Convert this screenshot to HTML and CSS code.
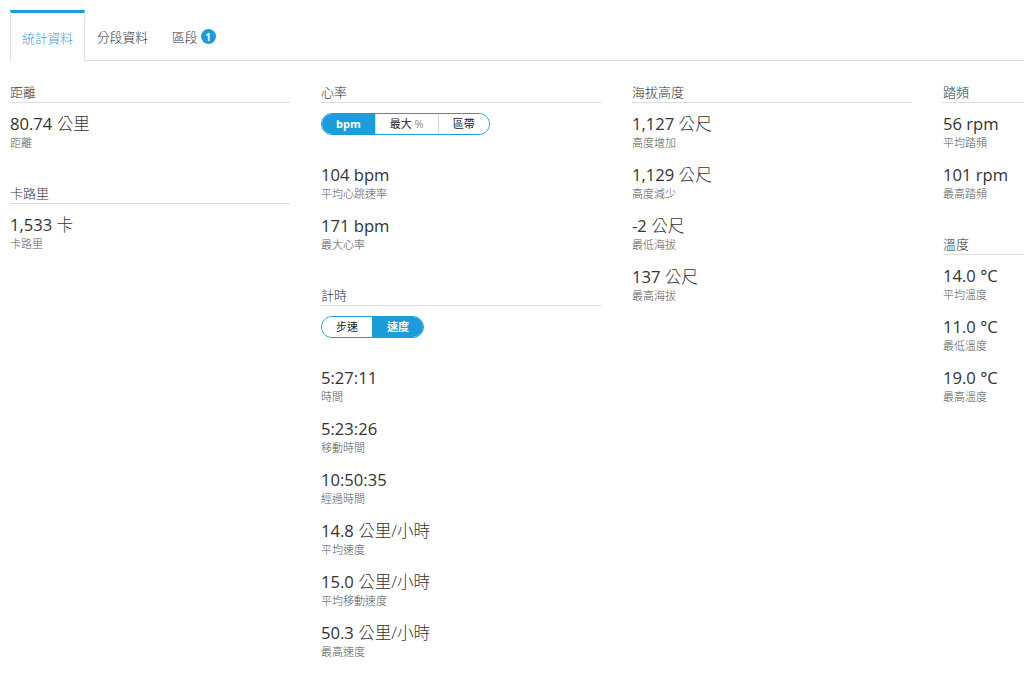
FILE: index.html
```html
<!DOCTYPE html>
<html lang="zh-Hant">
<head>
    <meta charset="UTF-8">
    <meta name="viewport" content="width=device-width, initial-scale=1.0">
    <title>統計資料</title>
    <link rel="stylesheet" href="styles.css">
</head>
<body>
    <!-- Tabs -->
    <div class="tabs">
        <div class="tab active">統計資料</div>
        <div class="tab">分段資料</div>
        <div class="tab">區段 <span class="badge">1</span></div>
    </div>

    <div class="columns">
        <!-- Column 1 -->
        <div class="column">
            <div class="section">
                <h3 class="section-title">距離</h3>
                <div class="stat">
                    <div class="value">80.74 <span class="unit">公里</span></div>
                    <div class="label">距離</div>
                </div>
            </div>
            <div class="section">
                <h3 class="section-title">卡路里</h3>
                <div class="stat">
                    <div class="value">1,533 <span class="unit">卡</span></div>
                    <div class="label">卡路里</div>
                </div>
            </div>
        </div>

        <!-- Column 2 -->
        <div class="column">
            <div class="section">
                <h3 class="section-title">心率</h3>
                <div class="toggle">
                    <span class="toggle-item selected">bpm</span>
                    <span class="toggle-item">最大 <span class="muted">%</span></span>
                    <span class="toggle-item">區帶</span>
                </div>
                <div class="stat">
                    <div class="value">104 bpm</div>
                    <div class="label">平均心跳速率</div>
                </div>
                <div class="stat">
                    <div class="value">171 bpm</div>
                    <div class="label">最大心率</div>
                </div>
            </div>
            <div class="section">
                <h3 class="section-title">計時</h3>
                <div class="toggle">
                    <span class="toggle-item">步速</span>
                    <span class="toggle-item selected">速度</span>
                </div>
                <div class="stat">
                    <div class="value">5:27:11</div>
                    <div class="label">時間</div>
                </div>
                <div class="stat">
                    <div class="value">5:23:26</div>
                    <div class="label">移動時間</div>
                </div>
                <div class="stat">
                    <div class="value">10:50:35</div>
                    <div class="label">經過時間</div>
                </div>
                <div class="stat">
                    <div class="value">14.8 <span class="unit">公里/小時</span></div>
                    <div class="label">平均速度</div>
                </div>
                <div class="stat">
                    <div class="value">15.0 <span class="unit">公里/小時</span></div>
                    <div class="label">平均移動速度</div>
                </div>
                <div class="stat">
                    <div class="value">50.3 <span class="unit">公里/小時</span></div>
                    <div class="label">最高速度</div>
                </div>
            </div>
        </div>

        <!-- Column 3 -->
        <div class="column">
            <div class="section">
                <h3 class="section-title">海拔高度</h3>
                <div class="stat">
                    <div class="value">1,127 <span class="unit">公尺</span></div>
                    <div class="label">高度增加</div>
                </div>
                <div class="stat">
                    <div class="value">1,129 <span class="unit">公尺</span></div>
                    <div class="label">高度減少</div>
                </div>
                <div class="stat">
                    <div class="value">-2 <span class="unit">公尺</span></div>
                    <div class="label">最低海拔</div>
                </div>
                <div class="stat">
                    <div class="value">137 <span class="unit">公尺</span></div>
                    <div class="label">最高海拔</div>
                </div>
            </div>
        </div>

        <!-- Column 4 -->
        <div class="column">
            <div class="section">
                <h3 class="section-title">踏頻</h3>
                <div class="stat">
                    <div class="value">56 rpm</div>
                    <div class="label">平均踏頻</div>
                </div>
                <div class="stat">
                    <div class="value">101 rpm</div>
                    <div class="label">最高踏頻</div>
                </div>
            </div>
            <div class="section">
                <h3 class="section-title">溫度</h3>
                <div class="stat">
                    <div class="value">14.0 °C</div>
                    <div class="label">平均溫度</div>
                </div>
                <div class="stat">
                    <div class="value">11.0 °C</div>
                    <div class="label">最低溫度</div>
                </div>
                <div class="stat">
                    <div class="value">19.0 °C</div>
                    <div class="label">最高溫度</div>
                </div>
            </div>
        </div>
    </div>
</body>
</html>
```

FILE: styles.css
```css
body {
    margin: 0;
    font-family: "Open Sans", "Noto Sans CJK TC", sans-serif;
    color: #333;
    background: #fff;
}

/* Tabs */
.tabs {
    display: flex;
    margin: 10px 0 0 10px;
    border-bottom: 1px solid #ddd;
}
.tab {
    display: flex;
    align-items: center;
    height: 47px;
    padding: 0 12px;
    border-top: 3px solid transparent;
    margin-bottom: -1px;
    font-size: 12.75px;
    font-weight: 300;
    color: #333;
}
.tab.active {
    padding: 0 11px;
    border-top-color: #1b9ddb;
    border-left: 1px solid #e2e2e2;
    border-right: 1px solid #e2e2e2;
    background: #fff;
    color: #3f9dd6;
    height: 48px;
}
.badge {
    display: inline-flex;
    align-items: center;
    justify-content: center;
    width: 15px;
    height: 15px;
    margin-left: 3px;
    border-radius: 50%;
    background: #1b9ddb;
    color: #fff;
    font-size: 10px;
    font-weight: 700;
}

/* Columns */
.columns {
    display: grid;
    grid-template-columns: repeat(3, 280px) 1fr;
    column-gap: 31px;
    padding-left: 10px;
    margin-top: 22px;
}
.section + .section {
    margin-top: 33px;
}
.section-title {
    margin: 0;
    padding-bottom: 1px;
    border-bottom: 1px solid #ddd;
    font-size: 13px;
    font-weight: 300;
    line-height: 18px;
    color: #333;
}
.section-title + .stat {
    margin-top: 10px;
}
.stat + .stat {
    margin-top: 13px;
}
.value {
    font-size: 16.6px;
    line-height: 22px;
    color: #333;
    white-space: nowrap;
}
.value .unit {
    font-weight: 300;
}
.label {
    font-size: 11px;
    font-weight: 300;
    line-height: 16px;
    color: #555;
}

/* Toggle buttons */
.toggle {
    display: inline-flex;
    margin: 10px 0 29px;
    border: 1px solid #1b9ddb;
    border-radius: 11px;
    overflow: hidden;
}
.toggle-item {
    height: 20px;
    line-height: 20px;
    padding: 0 14px;
    font-size: 11px;
    color: #222;
    background: #fff;
}
.toggle-item + .toggle-item {
    border-left: 1px solid #cfd8de;
}
.toggle-item.selected {
    background: #1b9ddb;
    color: #fff;
    font-weight: 700;
    border-left-color: #1b9ddb;
}
.toggle-item .muted {
    color: #888;
}
```
